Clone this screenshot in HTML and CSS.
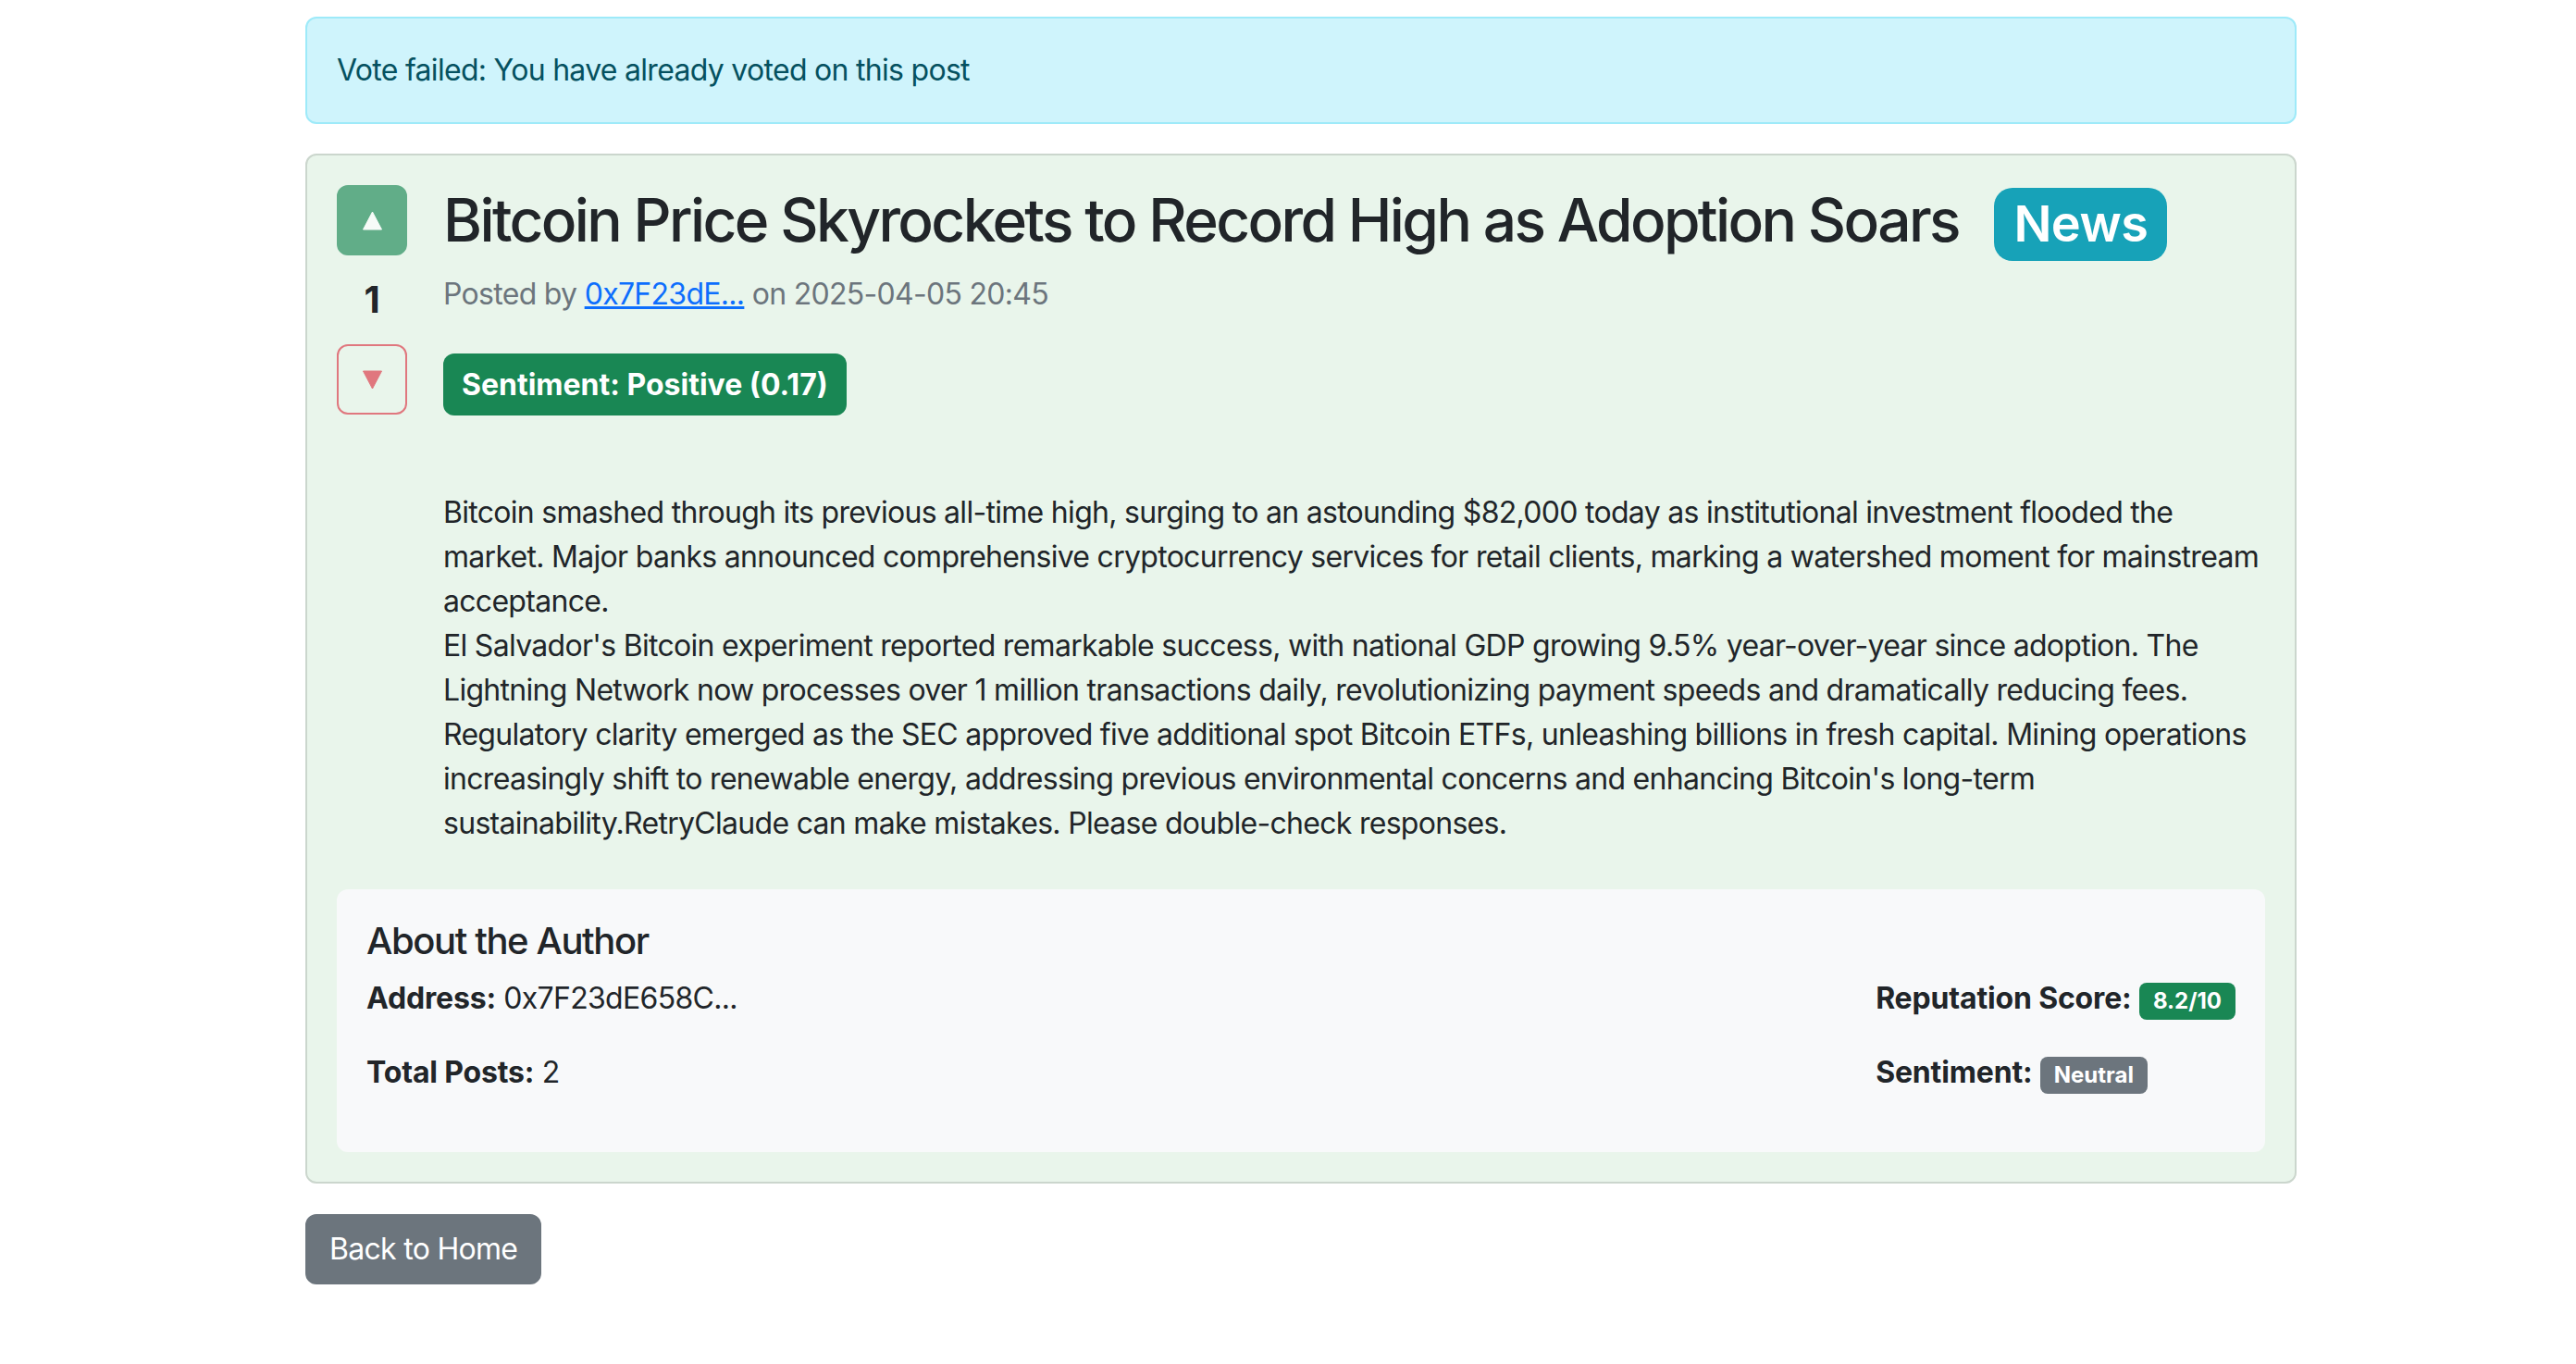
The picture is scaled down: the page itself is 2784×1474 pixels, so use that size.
FILE: index.html
```html
<!DOCTYPE html>
<html lang="en">
<head>
<meta charset="utf-8">
<title>Bitcoin Price Skyrockets to Record High as Adoption Soars</title>
<link rel="stylesheet" href="styles.css">
</head>
<body>
<div class="page">
  <div class="container">
    <div class="alert">Vote failed: You have already voted on this post</div>

    <div class="card">
      <div class="card-body">
        <div class="post-head">
          <div class="vote">
            <button class="vote-btn vote-up" type="button" disabled>
              <svg width="21" height="21" viewBox="0 0 21 21"><polygon points="10.5,1 20.5,20 0.5,20" fill="#fff" stroke="#fff" stroke-width="1" stroke-linejoin="round"/></svg>
            </button>
            <div class="vote-count">1</div>
            <button class="vote-btn vote-down" type="button" disabled>
              <svg width="21" height="21" viewBox="0 0 21 21"><polygon points="0.5,1 20.5,1 10.5,20" fill="#dc3545" stroke="#dc3545" stroke-width="1" stroke-linejoin="round"/></svg>
            </button>
          </div>
          <div class="post-main">
            <h2 class="post-title">Bitcoin Price Skyrockets to Record High as Adoption Soars <span class="badge-cat">News</span></h2>
            <p class="post-meta">Posted by <a href="#">0x7F23dE...</a> on 2025-04-05 20:45</p>
            <div><span class="badge-sentiment">Sentiment: Positive (0.17)</span></div>
            <div class="post-content">Bitcoin smashed through its previous all-time high, surging to an astounding $82,000 today as institutional investment flooded the market. Major banks announced comprehensive cryptocurrency services for retail clients, marking a watershed moment for mainstream acceptance.
El Salvador's Bitcoin experiment reported remarkable success, with national GDP growing 9.5% year-over-year since adoption. The Lightning Network now processes over 1 million transactions daily, revolutionizing payment speeds and dramatically reducing fees.
Regulatory clarity emerged as the SEC approved five additional spot Bitcoin ETFs, unleashing billions in fresh capital. Mining operations increasingly shift to renewable energy, addressing previous environmental concerns and enhancing Bitcoin's long-term sustainability.RetryClaude can make mistakes. Please double-check responses.</div>
          </div>
        </div>

        <div class="author">
          <h5 class="author-title">About the Author</h5>
          <div class="author-row">
            <div class="author-col">
              <p><strong>Address:</strong> 0x7F23dE658C...</p>
              <p><strong>Total Posts:</strong> 2</p>
            </div>
            <div class="author-col">
              <p><strong>Reputation Score:</strong> <span class="badge badge-success">8.2/10</span></p>
              <p><strong>Sentiment:</strong> <span class="badge badge-secondary">Neutral</span></p>
            </div>
          </div>
        </div>
      </div>
    </div>

    <a class="btn-back" href="#">Back to Home</a>
  </div>
</div>
</body>
</html>
```

FILE: styles.css
```css
* { box-sizing: border-box; }

html, body {
  margin: 0;
  padding: 0;
  background: #ffffff;
}

body {
  font-family: "Inter", "Liberation Sans", sans-serif;
  font-size: 32px;
  line-height: 48px;
  color: #212529;
  letter-spacing: -0.022em;
}

.page {
  padding: 18px 0 0 28px;
}

.container {
  width: 2152px;
  margin: 0 auto;
}

.alert {
  background: #cff4fc;
  border: 2px solid #9eeaf9;
  color: #055160;
  border-radius: 12px;
  padding: 32px;
  margin-bottom: 32px;
}

.card {
  background: #e9f5eb;
  border: 2px solid #cbd6cd;
  border-radius: 12px;
}

.card-body {
  padding: 32px;
}

.post-head {
  display: flex;
  align-items: flex-start;
}

.vote {
  width: 76px;
  flex: none;
  margin-right: 39px;
  display: flex;
  flex-direction: column;
  align-items: center;
}

.vote-btn {
  width: 76px;
  height: 76px;
  border-radius: 12px;
  border: 2px solid transparent;
  padding: 0;
  display: flex;
  align-items: center;
  justify-content: center;
  opacity: 0.65;
}

.vote-btn svg { display: block; }

.vote-up {
  background: #198754;
  border-color: #198754;
}

.vote-down {
  background: transparent;
  border-color: #dc3545;
}

.vote-count {
  font-size: 40px;
  font-weight: 700;
  line-height: 60px;
  margin: 18px 0;
  text-align: center;
  letter-spacing: 0;
}

.post-main {
  flex: 1;
  min-width: 0;
}

.post-title {
  font-size: 64px;
  font-weight: 500;
  line-height: 76.8px;
  margin: 0 0 12px;
  letter-spacing: -0.041em;
}

.badge-cat {
  display: inline-block;
  background: #17a2b8;
  color: #ffffff;
  font-size: 54px;
  font-weight: 600;
  line-height: 1;
  padding: 12px 21px 13px;
  border-radius: 20px;
  margin-left: 24px;
  letter-spacing: -0.01em;
  vertical-align: baseline;
}

.post-meta {
  color: #6c757d;
  margin: 0 0 40px;
}

.post-meta a {
  color: #0d6efd;
  text-decoration: underline;
}

.badge-sentiment {
  display: inline-block;
  background: #198754;
  color: #ffffff;
  font-weight: 700;
  font-size: 32px;
  line-height: 33px;
  padding: 17px 20px;
  border-radius: 12px;
  letter-spacing: 0;
}

.post-content {
  white-space: pre-line;
  margin-top: 81px;
}

.author {
  margin-top: 47px;
  background: #f8f9fa;
  border-radius: 12px;
  padding: 32px 32px 30px;
}

.author-title {
  font-size: 40px;
  font-weight: 500;
  line-height: 48px;
  margin: 0 0 14px;
  letter-spacing: -0.035em;
}

.author-row {
  display: flex;
  justify-content: space-between;
}

.author-col p {
  margin: 0 0 32px;
}

.author-col strong {
  font-weight: 700;
  letter-spacing: -0.005em;
}

.badge {
  display: inline-block;
  color: #ffffff;
  font-size: 24px;
  font-weight: 700;
  line-height: 1;
  padding: 8px 15px;
  border-radius: 8px;
  vertical-align: baseline;
  letter-spacing: 0;
}

.badge-success { background: #198754; }
.badge-secondary { background: #6c757d; }

.btn-back {
  display: inline-block;
  margin-top: 33px;
  background: #6c757d;
  border: 2px solid #6c757d;
  color: #ffffff;
  text-decoration: none;
  padding: 12px 24px;
  border-radius: 12px;
  font-size: 32px;
  line-height: 48px;
}
```
